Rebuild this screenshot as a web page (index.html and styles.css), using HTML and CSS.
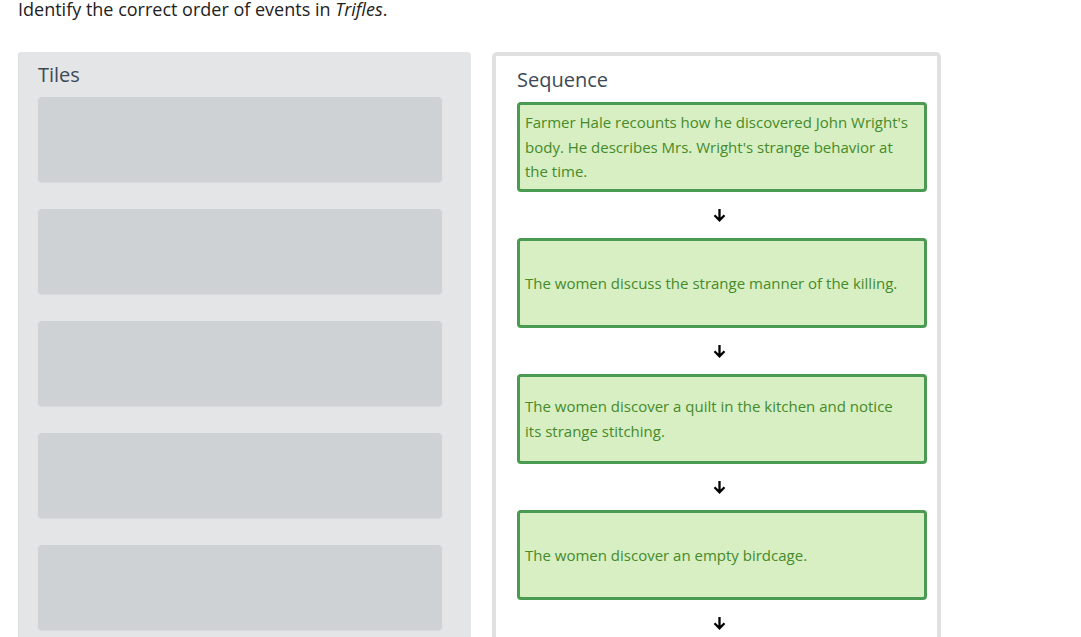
FILE: index.html
```html
<!DOCTYPE html>
<html>
<head>
<meta charset="utf-8">
<link rel="stylesheet" href="styles.css">
</head>
<body>
<p class="prompt">Identify the correct order of events in <em>Trifles</em>.</p>
<div class="board">
  <section class="tiles">
    <h2 class="panel-title">Tiles</h2>
    <div class="slot"></div>
    <div class="slot"></div>
    <div class="slot"></div>
    <div class="slot"></div>
    <div class="slot"></div>
  </section>
  <section class="sequence">
    <h2 class="panel-title seq-title">Sequence</h2>
    <div class="card">Farmer Hale recounts how he discovered John Wright's body. He describes Mrs. Wright's strange behavior at the time.</div>
    <div class="arrow"><svg width="13" height="14" viewBox="0 0 13 14"><path d="M6.5 1 V12.3 M1.5 7.3 L6.5 12.3 L11.5 7.3" fill="none" stroke="#000" stroke-width="2.3"/></svg></div>
    <div class="card">The women discuss the strange manner of the killing.</div>
    <div class="arrow"><svg width="13" height="14" viewBox="0 0 13 14"><path d="M6.5 1 V12.3 M1.5 7.3 L6.5 12.3 L11.5 7.3" fill="none" stroke="#000" stroke-width="2.3"/></svg></div>
    <div class="card">The women discover a quilt in the kitchen and notice its strange stitching.</div>
    <div class="arrow"><svg width="13" height="14" viewBox="0 0 13 14"><path d="M6.5 1 V12.3 M1.5 7.3 L6.5 12.3 L11.5 7.3" fill="none" stroke="#000" stroke-width="2.3"/></svg></div>
    <div class="card">The women discover an empty birdcage.</div>
    <div class="arrow"><svg width="13" height="14" viewBox="0 0 13 14"><path d="M6.5 1 V12.3 M1.5 7.3 L6.5 12.3 L11.5 7.3" fill="none" stroke="#000" stroke-width="2.3"/></svg></div>
  </section>
</div>
</body>
</html>
```

FILE: styles.css
```css
html, body {
  margin: 0;
  padding: 0;
  background: #ffffff;
  overflow: hidden;
}
body {
  font-family: "Open Sans", "Liberation Sans", sans-serif;
  color: #222;
  height: 637px;
}
.prompt {
  margin: -3px 0 0 18px;
  font-size: 18px;
  line-height: 24px;
  color: #222;
}
.board {
  display: flex;
  align-items: flex-start;
  gap: 21px;
  margin: 31px 0 0 18px;
}
.tiles {
  box-sizing: border-box;
  width: 453px;
  height: 660px;
  padding: 10px 29px 20px 20px;
  background: #e4e5e7;
  border-radius: 4px;
  box-shadow: inset 1px 0 0 #dcdddf;
  display: flex;
  flex-direction: column;
  gap: 27px;
}
.panel-title {
  margin: 0;
  font-weight: 400;
  font-size: 20px;
  line-height: 25px;
  color: #3d4a56;
}
.tiles .panel-title {
  margin-bottom: -17px;
}
.slot {
  width: 404px;
  height: 85px;
  flex: none;
  background: #cfd2d4;
  border-radius: 4px;
  box-shadow: 0 1px 1px rgba(0,0,0,0.06);
}
.sequence {
  box-sizing: border-box;
  width: 449px;
  height: 660px;
  border: 4px solid #e0e0e0;
  border-radius: 5px;
  padding: 10px 10px 20px 21px;
  background: #fff;
  display: flex;
  flex-direction: column;
}
.seq-title {
  margin-top: 1px;
  margin-bottom: 10px;
}
.card {
  box-sizing: border-box;
  width: 410px;
  height: 90px;
  flex: none;
  border: 3px solid #4a9a52;
  border-radius: 4px;
  background: #d7efc2;
  color: #468a2a;
  font-size: 15px;
  line-height: 24.7px;
  padding: 0 13px 0 5px;
  display: flex;
  align-items: center;
}
.arrow {
  height: 46px;
  flex: none;
  display: flex;
  align-items: center;
  justify-content: center;
  padding-right: 6px;
}
.arrow svg {
  display: block;
}
```
